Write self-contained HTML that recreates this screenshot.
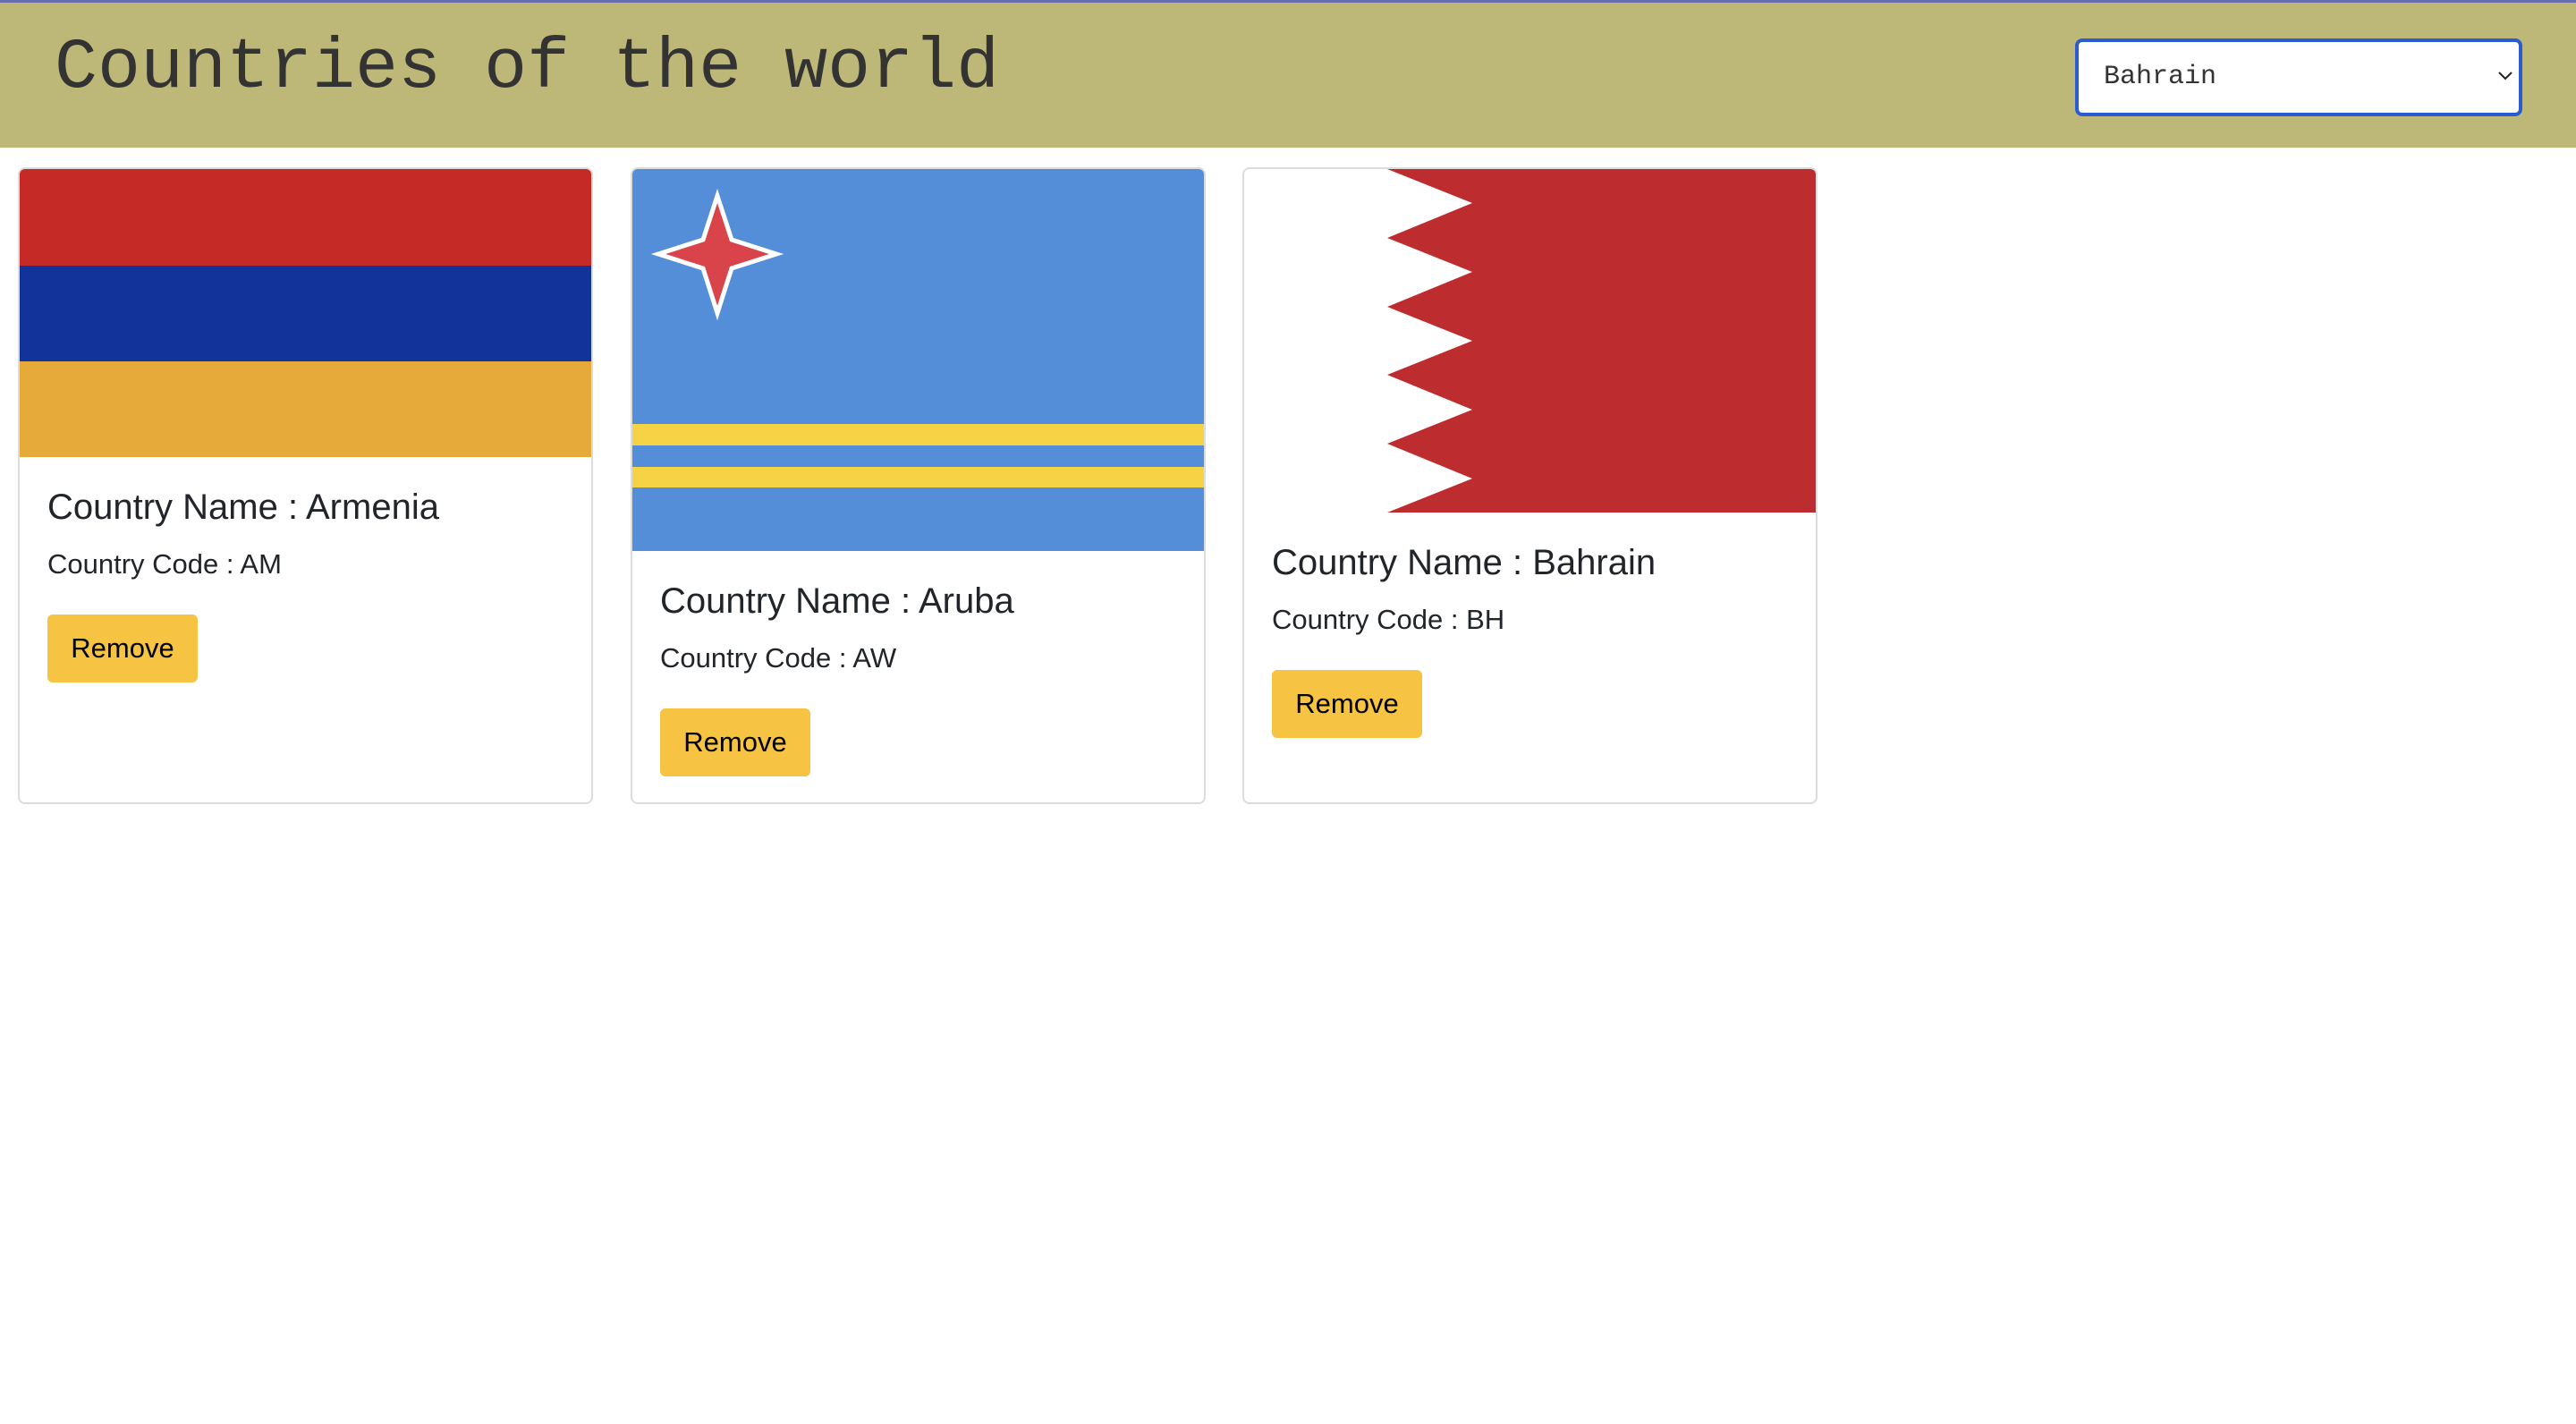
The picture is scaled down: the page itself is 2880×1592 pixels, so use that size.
<!DOCTYPE html>
<html><head><style>
*{box-sizing:border-box;margin:0;padding:0}
body{width:2880px;height:1592px;background:#fff;font-family:"Liberation Sans",sans-serif;color:#212529;position:relative;overflow:hidden}
.hdr{position:absolute;left:0;top:0;width:2880px;height:165px;background:#bdb877;border-top:3px solid #6a6cb0}
.title{position:absolute;left:61px;top:28px;font-family:"Liberation Mono",monospace;font-size:80px;line-height:92px;color:#333}
.sel{position:absolute;left:2320px;top:40px;width:500px;height:87px;background:#fff;border:4px solid #2a5bd0;border-radius:8px;font-family:"Liberation Mono",monospace;font-size:30px;line-height:79px;padding-left:28px;color:#333}
.sel svg{position:absolute;right:6px;top:32px}
.card{position:absolute;top:187px;width:643px;height:712px;border:2px solid #dcdcdc;border-radius:8px;overflow:hidden;background:#fff}
.card svg.f{display:block}
.body{padding:32px 31px}
h5{font-size:40px;font-weight:400;line-height:48px;margin-bottom:16px}
p{font-size:31px;line-height:48px;margin-bottom:32px}
.btn{display:inline-block;width:168px;height:76px;background:#f6c343;border-radius:6px;font-size:31px;line-height:76px;text-align:center;color:#000}
</style></head><body>
<div class="hdr"><div class="title">Countries of the world</div>
<div class="sel">Bahrain<svg width="18" height="12" viewBox="0 0 18 12"><path d="M2 2 L9 9 L16 2" stroke="#222" stroke-width="2" fill="none"/></svg></div></div>

<div class="card" style="left:20px">
<svg class="f" width="643" height="322"><rect width="643" height="108" fill="#c62a26"/><rect y="108" width="643" height="107" fill="#123399"/><rect y="215" width="643" height="107" fill="#e6aa3b"/></svg>
<div class="body"><h5>Country Name : Armenia</h5><p>Country Code : AM</p><span class="btn">Remove</span></div></div>

<div class="card" style="left:705px">
<svg class="f" width="643" height="427"><rect width="643" height="427" fill="#558ed8"/><rect y="285" width="643" height="24" fill="#f6d245"/><rect y="333" width="643" height="23" fill="#f6d245"/>
<path d="M95 30 L111 79 L161 95 L111 111 L95 161 L79 111 L29 95 L79 79 Z" fill="#d9434a" stroke="#fff" stroke-width="5" stroke-linejoin="miter"/></svg>
<div class="body"><h5>Country Name : Aruba</h5><p>Country Code : AW</p><span class="btn">Remove</span></div></div>

<div class="card" style="left:1389px">
<svg class="f" width="643" height="384"><rect width="643" height="384" fill="#fff"/><path d="M160 0 L643 0 L643 384 L160 384 L255 346 L160 307 L255 269 L160 230 L255 192 L160 154 L255 115 L160 77 L255 38 Z" fill="#bd2c2f"/></svg>
<div class="body"><h5>Country Name : Bahrain</h5><p>Country Code : BH</p><span class="btn">Remove</span></div></div>
</body></html>
